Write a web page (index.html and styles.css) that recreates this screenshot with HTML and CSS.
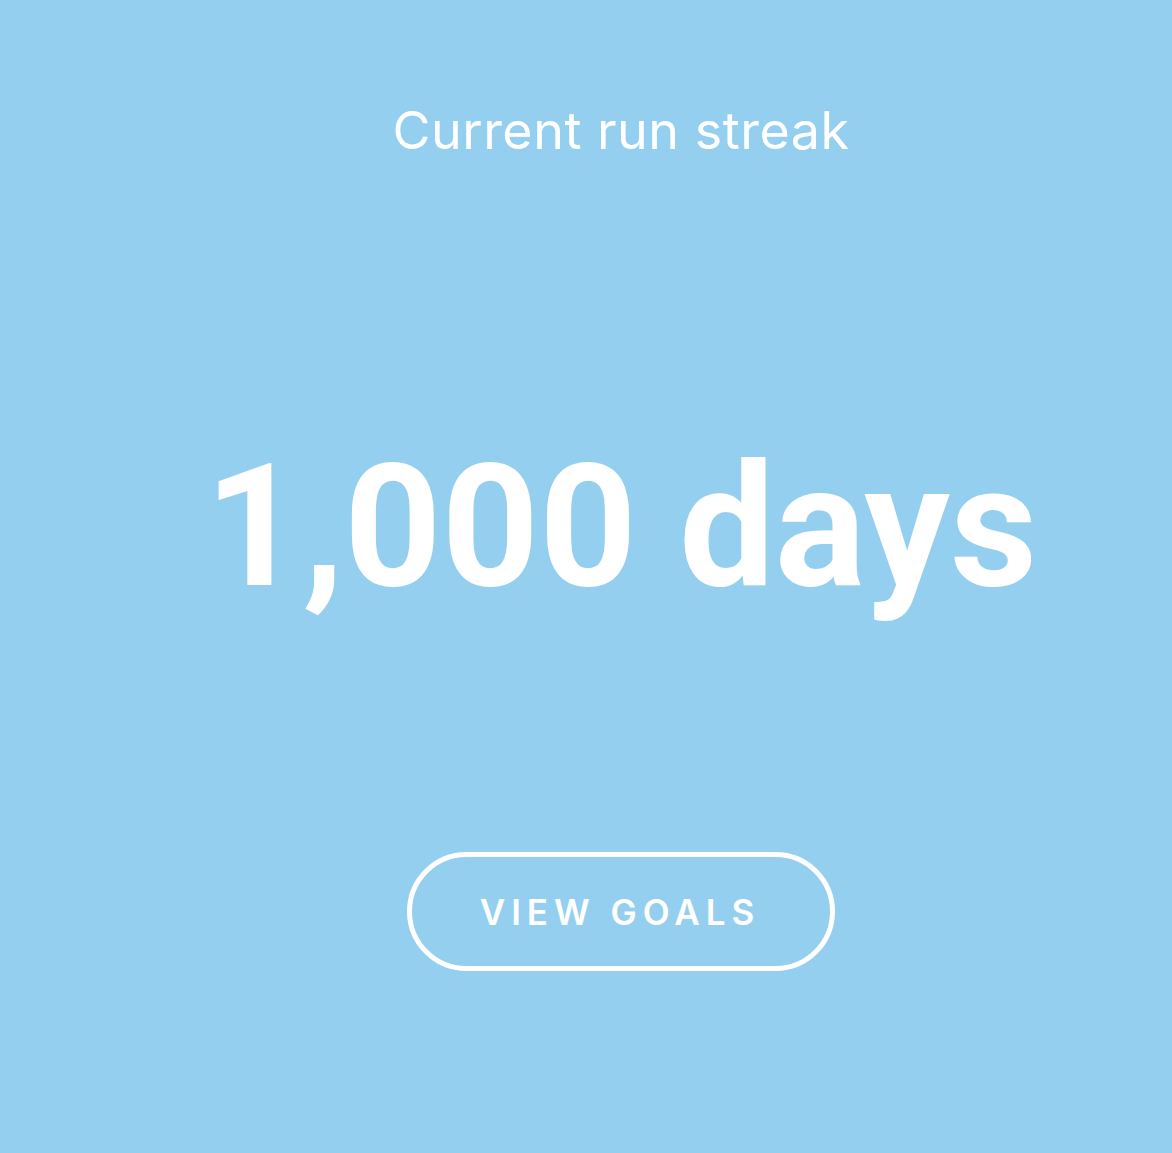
FILE: index.html
```html
<!DOCTYPE html>
<html lang="en">
<head>
<meta charset="utf-8">
<title>Current run streak</title>
<link rel="stylesheet" href="styles.css">
</head>
<body>
<main class="streak-card">
  <h2 class="streak-label">Current run streak</h2>
  <p class="streak-value">1,000 days</p>
  <a class="goals-button" href="#">VIEW GOALS</a>
</main>
</body>
</html>
```

FILE: styles.css
```css
html, body {
  margin: 0;
  padding: 0;
  background: #94cfef;
}

.streak-card {
  box-sizing: border-box;
  width: 1172px;
  height: 1153px;
  padding: 96px 0 0 70px;
  display: flex;
  flex-direction: column;
  align-items: center;
  background: #94cfef;
  color: #ffffff;
  font-family: Inter, Lato, "Liberation Sans", sans-serif;
}

.streak-label {
  margin: 0;
  font-size: 52px;
  font-weight: 400;
  letter-spacing: 0.5px;
  line-height: 70px;
}

.streak-value {
  margin: 276px 0 0;
  font-family: Roboto, Inter, sans-serif;
  font-size: 170px;
  font-weight: 700;
  line-height: 170px;
  letter-spacing: 0;
}

.goals-button {
  margin-top: 240px;
  box-sizing: border-box;
  width: 428px;
  height: 119px;
  border: 5px solid #ffffff;
  border-radius: 60px;
  display: flex;
  align-items: center;
  justify-content: center;
  color: #ffffff;
  text-decoration: none;
  font-size: 35px;
  font-weight: 600;
  letter-spacing: 6px;
  padding-right: 2px;
}
```
